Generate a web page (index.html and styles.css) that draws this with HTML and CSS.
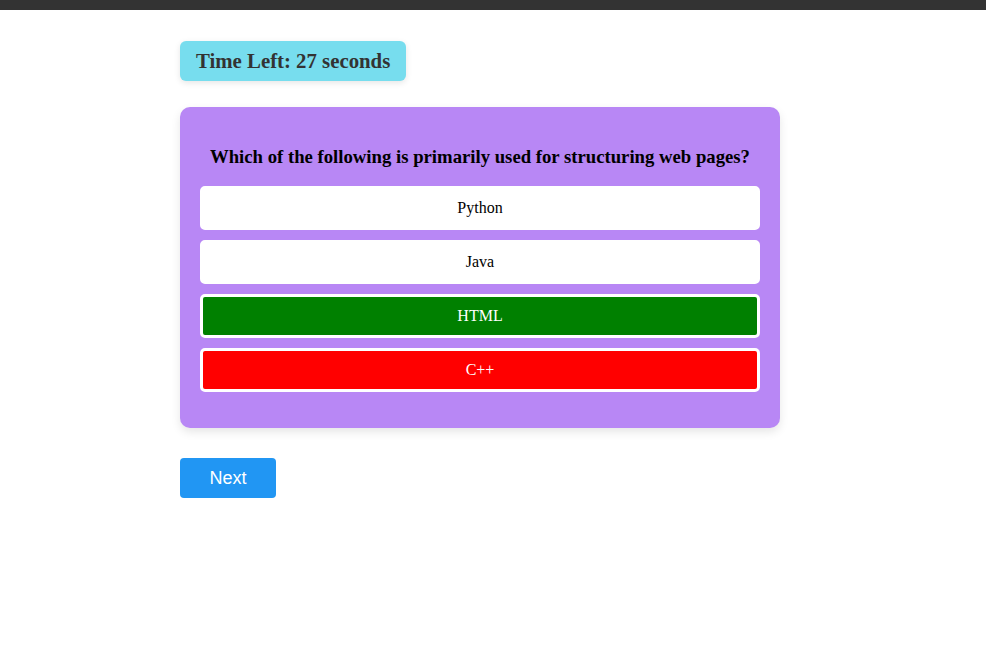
FILE: index.html
```html
<!DOCTYPE html>
<html>
<head>
<meta charset="utf-8">
<link rel="stylesheet" href="styles.css">
</head>
<body>
<div class="topbar"></div>
<main class="quiz">
  <div class="timer">Time Left: 27 seconds</div>
  <section class="card">
    <h3 class="question">Which of the following is primarily used for structuring web pages?</h3>
    <div class="options">
      <button class="option">Python</button>
      <button class="option">Java</button>
      <button class="option correct">HTML</button>
      <button class="option wrong">C++</button>
    </div>
  </section>
  <button class="next">Next</button>
</main>
</body>
</html>
```
FILE: styles.css
```css
html, body {
  margin: 0;
  padding: 0;
  background: #fff;
}
body {
  font-family: "Liberation Serif", "Times New Roman", serif;
  color: #000;
}
.topbar {
  height: 10px;
  background: #333;
}
.quiz {
  width: 600px;
  padding: 31px 0 0 180px;
  display: flex;
  flex-direction: column;
  align-items: flex-start;
}
.timer {
  height: 40px;
  box-sizing: border-box;
  padding: 0 16px;
  display: flex;
  align-items: center;
  background: #77ddee;
  color: #333;
  font-weight: bold;
  font-size: 20.8px;
  border-radius: 6px;
  box-shadow: 0 2px 6px rgba(0, 0, 0, 0.1);
}
.card {
  margin-top: 26px;
  width: 600px;
  box-sizing: border-box;
  padding: 20px 20px 36px;
  background: #b887f5;
  border-radius: 10px;
  box-shadow: 0 4px 10px rgba(0, 0, 0, 0.1);
}
.question {
  margin: 19px 0 18px;
  font-size: 18.72px;
  line-height: 22px;
  text-align: center;
  font-weight: bold;
}
.options {
  display: flex;
  flex-direction: column;
  gap: 10px;
}
.option {
  height: 44px;
  border: 3px solid #fff;
  border-radius: 5px;
  background: #fff;
  color: #000;
  font-family: "Liberation Serif", "Times New Roman", serif;
  font-size: 16px;
  cursor: pointer;
}
.option.correct {
  background: #008000;
  color: #fff;
}
.option.wrong {
  background: #ff0000;
  color: #fff;
}
.next {
  margin-top: 30px;
  width: 96px;
  height: 40px;
  border: none;
  border-radius: 4px;
  background: #2196f3;
  color: #fff;
  font-family: "Liberation Sans", Arial, sans-serif;
  font-size: 18px;
  cursor: pointer;
}
```
